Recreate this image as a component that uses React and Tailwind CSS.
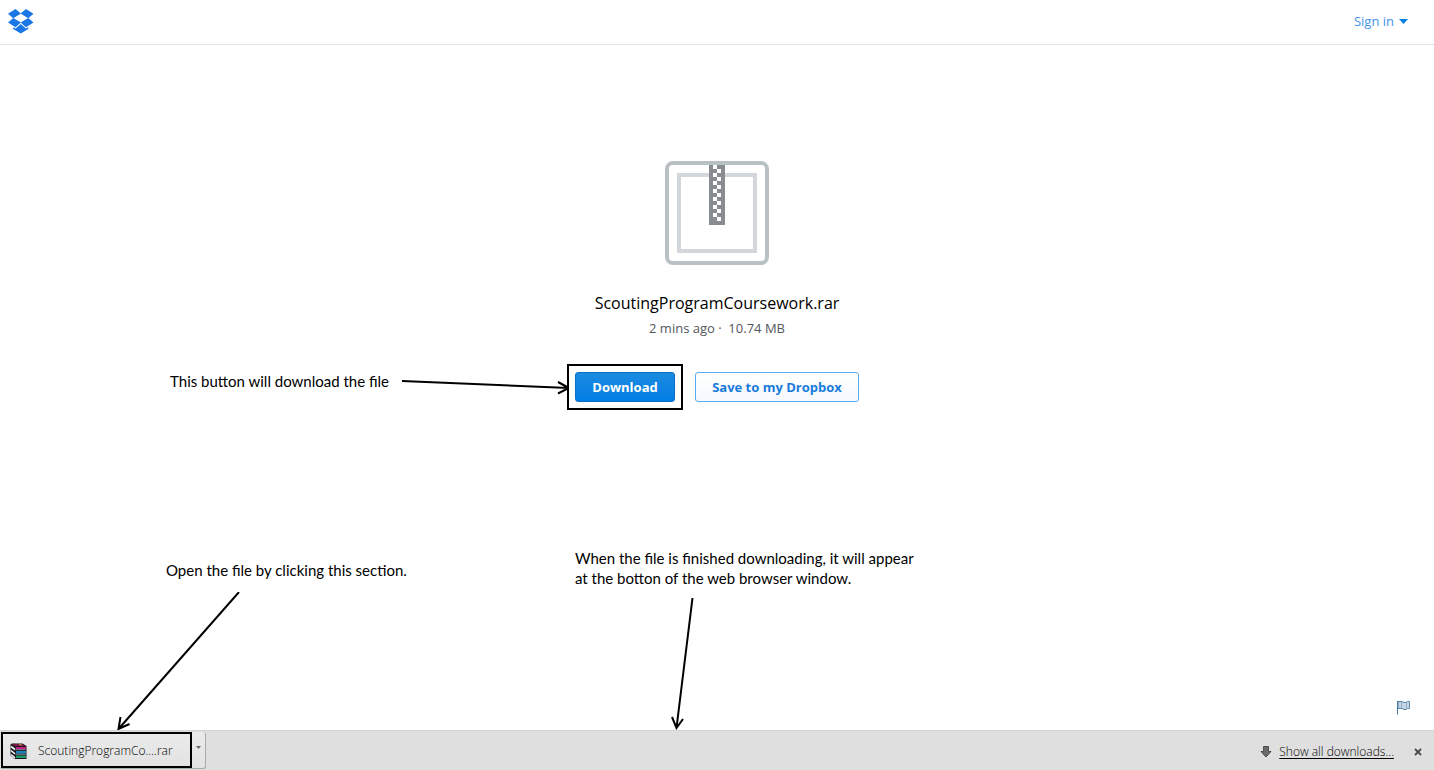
const zipperRows = Array.from({ length: 14 }, (_, i) => i);

function DropboxLogo() {
  return (
    <svg width="26" height="26" viewBox="0 0 26 26" fill="#1b77e5" aria-hidden="true">
      <path d="M0 5.800 7.500 1 12.900 5.500 5.300 10.200ZM25.500 5.800 18 1 12.600 5.500 20.200 10.200ZM0 14.500 5.300 10 12.900 14.600 7.500 19.200ZM25.500 14.500 20.200 10 12.600 14.600 18 19.200Z" />
      <path d="M5.200 19.200 7.600 20.400 12.800 16 17.900 20.400 20.300 19.200V20.900L12.800 25.500 5.200 20.900Z" />
    </svg>
  );
}

function ArchiveIcon() {
  return (
    <svg width="104" height="104" viewBox="0 0 104 104" role="img" aria-label="Archive">
      <rect x="2" y="2" width="100" height="100" rx="6" fill="#fff" stroke="#b9c1c5" strokeWidth="4" />
      <rect x="14" y="14" width="76" height="76" fill="none" stroke="#d3d6db" strokeWidth="4" />
      <rect x="44" y="4" width="16" height="60" fill="#898c90" />
      {zipperRows.map((row) => (
        <rect key={row} x={row % 2 ? 52 : 48} y={4 + row * 4} width="4" height="4" fill="#fff" />
      ))}
    </svg>
  );
}

function Arrow({ width, height, d, className }) {
  return (
    <svg
      width={width}
      height={height}
      viewBox={`0 0 ${width} ${height}`}
      className={className}
      fill="none"
      stroke="#000"
      strokeWidth="2"
      aria-hidden="true"
    >
      <path d={d} />
    </svg>
  );
}

function BooksIcon() {
  return (
    <svg width="17" height="17" viewBox="0 0 17 17" aria-hidden="true">
      <path d="M0.500 1.500 2 .5H12.500L16.500 3V16H5L0.500 12.500Z" fill="#17171d" />
      <path d="M1.500 1.500 2.500 1H12L15 3H5Z" fill="#7d1745" />
      <path d="M6 4H16V6H6Z" fill="#c41f86" />
      <path d="M6 8H16V10.500H6Z" fill="#1684c4" />
      <path d="M6 12.500H16V15H6Z" fill="#1a9a6a" />
      <path d="M1 3.500 5 6.500M1 7.500 5 10.800M1 11.500 5 14.800" stroke="#f2f2f2" strokeWidth="1.600" />
      <path d="M5.500 6.700H15.500M5.500 11.200H15.500" stroke="#c4c4c4" strokeWidth=".7" />
      <path d="M8.500 1H10.500L12.500 2.500H10.500Z" fill="#c79a3a" />
    </svg>
  );
}

function FlagIcon() {
  return (
    <svg width="13" height="15" viewBox="0 0 13 15" aria-hidden="true">
      <path d="M1 1.500H5L7 2.500H9L10.500 1.500H12.500V8.500H10.500L9 9.500H7L5 8.500H1Z" fill="#c3d5e4" stroke="#5d89ab" />
      <path d="M4.500 2V8M9.500 3V9" stroke="#94b1c8" />
      <path d="M.5 1V14.500" stroke="#487ba3" />
    </svg>
  );
}

export default function App() {
  return (
    <div className="flex min-h-screen flex-col overflow-x-hidden bg-white font-['Open_Sans',sans-serif]">
      <header className="flex h-[45px] items-center justify-between border-b border-[#e1e2e4] pr-[26px] pb-0.5 pl-2">
        <a href="#home" aria-label="Dropbox">
          <DropboxLogo />
        </a>
        <button type="button" className="flex items-center gap-[5px] text-[13px] leading-5 text-[#4094ec]">
          Sign in
          <svg width="9" height="5" viewBox="0 0 9 5" fill="#087fe5" aria-hidden="true">
            <path d="M0 0H9L4.500 5Z" />
          </svg>
        </button>
      </header>

      <main className="relative flex flex-1 flex-col items-center pt-[116px]">
        <ArchiveIcon />
        <h1 className="mt-[26px] text-[16px] leading-6 font-normal text-black">ScoutingProgramCoursework.rar</h1>
        <p className="mt-[3px] text-[13px] leading-5 whitespace-pre text-[#53575e]">2 mins ago ·  10.74 MB</p>

        <div className="mt-[26px] flex items-center gap-3 pr-2">
          <div className="relative border-2 border-black p-1.5">
            <button
              type="button"
              className="block h-[30px] w-[100px] rounded-[3px] border border-[#0b6fc6] bg-linear-to-b from-[#1b8be0] to-[#007ee5] text-[13px] leading-5 font-bold text-white"
            >
              Download
            </button>
            <div className="absolute top-1/2 right-full flex -translate-y-1/2 items-center gap-3 text-[15px] leading-5 whitespace-nowrap text-black">
              <p className="pb-3 font-['Lato',sans-serif]">This button will download the file</p>
              <Arrow width={168} height={22} d="M1 5 168 12M157 6 168 12 157 17.500" />
            </div>
          </div>
          <button
            type="button"
            className="h-[30px] w-[164px] rounded-[3px] border border-[#5aaaf0] bg-linear-to-b from-white to-[#f5f9fd] text-[13px] leading-5 font-bold text-[#187bdb]"
          >
            Save to my Dropbox
          </button>
        </div>

        <div className="absolute bottom-0 left-[117px] font-['Lato',sans-serif] text-[15px] leading-5 text-black">
          <p className="mb-3 pl-[49px] whitespace-nowrap">Open the file by clicking this section.</p>
          <Arrow className="block" width={124} height={138} d="M122 0 1.500 137M3.500 125 1.500 137 12.500 132" />
        </div>

        <div className="absolute bottom-0 left-1/2 -ml-[142px] font-['Lato',sans-serif] text-[15px] leading-5 text-black">
          <p className="mb-2.5 whitespace-nowrap">
            When the file is finished downloading, it will appear
            <br />
            at the botton of the web browser window.
          </p>
          <Arrow className="ml-[94px] block" width={26} height={132} d="M23.500 0 7.500 130M3 119 7.500 130 14 121" />
        </div>

        <button type="button" aria-label="Report" className="absolute right-6 bottom-[15px]">
          <FlagIcon />
        </button>
      </main>

      <footer className="flex h-10 items-center justify-between border-t border-[#d2d2d2] bg-[#dfdfdf] pr-3 pl-px text-[12px] leading-4 font-light text-black">
        <div className="flex rounded-r-[3px] border-r border-b border-[#acacac] bg-linear-to-b from-[#ebebeb] to-[#e2e2e2]">
          <button type="button" className="flex h-9 w-[191px] items-center gap-[11px] border-2 border-black pt-0.5 pl-[7px]">
            <BooksIcon />
            ScoutingProgramCo....rar
          </button>
          <button type="button" aria-label="Download options" className="flex w-[13px] justify-center pt-[14px]">
            <svg width="5" height="3" viewBox="0 0 5 3" fill="#666" aria-hidden="true">
              <path d="M0 0H5L2.500 3Z" />
            </svg>
          </button>
        </div>
        <div className="flex items-center pt-0.5">
          <svg width="12" height="12" viewBox="0 0 12 12" fill="#6b6b6b" stroke="#505050" aria-hidden="true">
            <path d="M3.500.5H8.500V5.500H11L6 11 1 5.500H3.500Z" />
          </svg>
          <a href="#downloads" className="ml-[7px] underline underline-offset-2">
            Show all downloads...
          </a>
          <button type="button" aria-label="Close" className="ml-5">
            <svg width="8" height="8" viewBox="0 0 8 8" stroke="#484848" strokeWidth="1.800" aria-hidden="true">
              <path d="M1 1 7 7M7 1 1 7" />
            </svg>
          </button>
        </div>
      </footer>
    </div>
  );
}
